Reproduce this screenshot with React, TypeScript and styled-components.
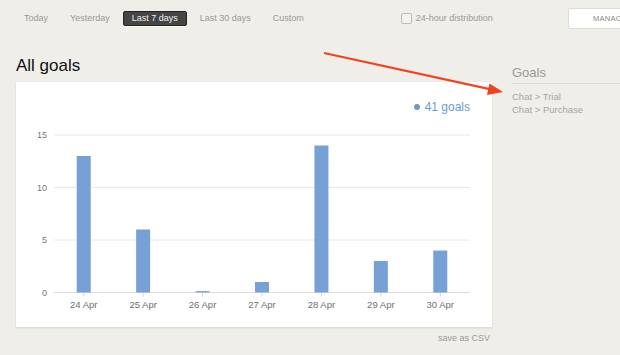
import React from "react";
import styled, { createGlobalStyle } from "styled-components";

const Global = createGlobalStyle`
  html, body { margin: 0; padding: 0; }
  body {
    background: #efeee9;
    font-family: "Liberation Sans", Arial, sans-serif;
    width: 620px;
    height: 355px;
    overflow: hidden;
  }
`;

const Page = styled.div`
  position: relative;
  width: 620px;
  height: 355px;
  overflow: hidden;
`;

const Header = styled.header`
  display: flex;
  align-items: center;
  height: 20px;
  padding: 8px 0 0 15px;
  white-space: nowrap;
`;

const Nav = styled.nav`
  display: flex;
  align-items: center;
  gap: 4px;
`;

const NavItem = styled.span<{ $active?: boolean }>`
  display: inline-flex;
  align-items: center;
  height: 13px;
  padding: 0 8px;
  font-size: 9px;
  color: ${(p) => (p.$active ? "#f0f0f0" : "#9a9a98")};
  background: ${(p) => (p.$active ? "#454545" : "transparent")};
  border: 1px solid ${(p) => (p.$active ? "#222" : "transparent")};
  border-radius: 2px;
  box-shadow: ${(p) => (p.$active ? "0 1px 1px rgba(255,255,255,0.8)" : "none")};
`;

const CheckLabel = styled.label`
  display: flex;
  align-items: center;
  gap: 4px;
  margin-left: 88px;
  font-size: 9px;
  color: #9a9a98;
`;

const Box = styled.span`
  width: 9px;
  height: 9px;
  border: 1px solid #bdbdbb;
  border-radius: 2px;
  background: #f3f3f1;
`;

const ManageButton = styled.button`
  flex-shrink: 0;
  margin-left: 75px;
  height: 21px;
  padding: 0 24px;
  background: #fff;
  border: 1px solid #dcdcd8;
  border-radius: 2px;
  font-family: "Liberation Sans", Arial, sans-serif;
  font-size: 7.5px;
  letter-spacing: 0.3px;
  color: #8a8a8a;
  text-align: left;
`;

const Body = styled.div`
  display: flex;
  gap: 20px;
  padding: 28px 0 0 16px;
`;

const Main = styled.main`
  width: 476px;
  flex-shrink: 0;
`;

const Title = styled.h1`
  margin: 0 0 6px 0;
  font-size: 17px;
  line-height: 20px;
  font-weight: normal;
  color: #111;
`;

const Card = styled.section`
  background: #fff;
  height: 245px;
  box-shadow: 0 1px 2px rgba(0, 0, 0, 0.12);
  display: flex;
  flex-direction: column;
`;

const Legend = styled.div`
  display: flex;
  justify-content: flex-end;
  align-items: center;
  gap: 5px;
  height: 14px;
  margin-top: 18px;
  padding-right: 22px;
  font-size: 12px;
  color: #6a9bd6;
`;

const Dot = styled.span`
  width: 6px;
  height: 6px;
  border-radius: 50%;
  background: #6a9bd6;
`;

const Chart = styled.svg`
  display: block;
  font-family: "Liberation Sans", Arial, sans-serif;
`;

const Save = styled.div`
  text-align: right;
  font-size: 9px;
  color: #9a9a98;
  margin-top: 6px;
  padding-right: 2px;
`;

const Side = styled.aside`
  flex: 1;
  padding-top: 9px;
`;

const SideTitle = styled.h2`
  margin: 0;
  font-size: 13px;
  line-height: 16px;
  font-weight: normal;
  color: #9a9a98;
  padding-bottom: 2px;
  border-bottom: 1px solid #d9d9d5;
`;

const GoalList = styled.ul`
  list-style: none;
  margin: 6px 0 0 0;
  padding: 0;
  font-size: 9.5px;
  line-height: 13px;
  color: #a6a6a4;
`;

const Arrow = styled.svg`
  position: absolute;
  left: 0;
  top: 0;
  pointer-events: none;
`;

const data = [
  { label: "24 Apr", v: 13 },
  { label: "25 Apr", v: 6 },
  { label: "26 Apr", v: 0.13 },
  { label: "27 Apr", v: 1 },
  { label: "28 Apr", v: 14 },
  { label: "29 Apr", v: 3 },
  { label: "30 Apr", v: 4 },
];

const PLOT_L = 38;
const PLOT_W = 416;
const ZERO = 178.5;
const UNIT = 10.5;

export default function App() {
  const band = PLOT_W / data.length;
  return (
    <Page>
      <Global />
      <Header>
        <Nav>
          <NavItem>Today</NavItem>
          <NavItem>Yesterday</NavItem>
          <NavItem $active>Last 7 days</NavItem>
          <NavItem>Last 30 days</NavItem>
          <NavItem>Custom</NavItem>
        </Nav>
        <CheckLabel>
          <Box />
          24-hour distribution
        </CheckLabel>
        <ManageButton>MANAGE GOALS</ManageButton>
      </Header>
      <Body>
        <Main>
          <Title>All goals</Title>
          <Card>
            <Legend>
              <Dot />
              41 goals
            </Legend>
            <Chart width={476} height={213} viewBox="0 0 476 213">
              {[0, 5, 10, 15].map((t) => {
                const y = ZERO - t * UNIT;
                return (
                  <g key={t}>
                    <line
                      x1={PLOT_L}
                      x2={PLOT_L + PLOT_W}
                      y1={y}
                      y2={y}
                      stroke={t === 0 ? "#dcdcdc" : "#e8e8e8"}
                      strokeWidth={1}
                    />
                    <text
                      x={31}
                      y={y + 3}
                      textAnchor="end"
                      fontSize={9}
                      fill="#777"
                    >
                      {t}
                    </text>
                  </g>
                );
              })}
              {data.map((d, i) => {
                const cx = PLOT_L + band * (i + 0.5);
                const h = d.v * UNIT;
                return (
                  <g key={d.label}>
                    <line x1={cx} x2={cx} y1={ZERO} y2={ZERO + 4} stroke="#d4d4d4" />
                    <rect x={cx - 7} y={ZERO - h} width={14} height={h} fill="#77a1d6" />
                    <text
                      x={cx}
                      y={ZERO + 15}
                      textAnchor="middle"
                      fontSize={9.5}
                      fill="#6e6e6e"
                    >
                      {d.label}
                    </text>
                  </g>
                );
              })}
            </Chart>
          </Card>
          <Save>save as CSV</Save>
        </Main>
        <Side>
          <SideTitle>Goals</SideTitle>
          <GoalList>
            <li>Chat &gt; Trial</li>
            <li>Chat &gt; Purchase</li>
          </GoalList>
        </Side>
      </Body>
      <Arrow width={620} height={355} viewBox="0 0 620 355">
        <line x1={324} y1={53} x2={492} y2={89.6} stroke="#f2421f" strokeWidth={2.2} />
        <polygon points="503,92 489.5,83.5 487,95" fill="#f2421f" />
      </Arrow>
    </Page>
  );
}
